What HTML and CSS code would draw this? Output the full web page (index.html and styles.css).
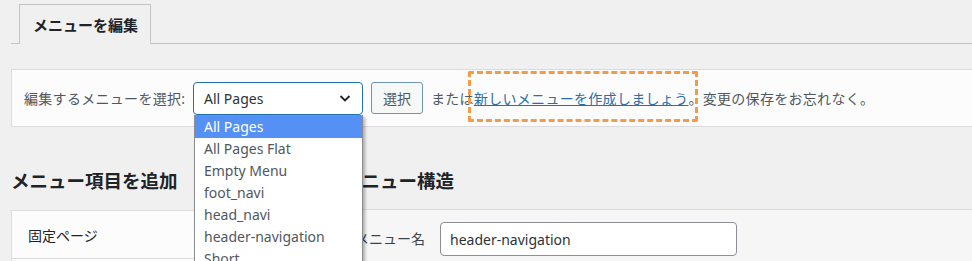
FILE: index.html
```html
<!DOCTYPE html>
<html lang="ja">
<head>
    <meta charset="UTF-8">
    <title>メニューを編集</title>
    <link rel="stylesheet" href="styles.css">
</head>
<body>
    <div class="wrap">
        <!-- Tabs -->
        <div class="tabs">
            <a href="#" class="tab active">メニューを編集</a>
        </div>

        <!-- Select menu bar -->
        <div class="manage">
            <span class="manage-label">編集するメニューを選択:</span>
            <div class="select-wrap">
                <div class="select">
                    <span>All Pages</span>
                    <svg class="chevron" width="16" height="16" viewBox="0 0 16 16">
                        <path d="M3.5 6 L8 10.5 L12.5 6" fill="none" stroke="#1d2327" stroke-width="1.8"/>
                    </svg>
                </div>
                <ul class="dropdown">
                    <li class="selected">All Pages</li>
                    <li>All Pages Flat</li>
                    <li>Empty Menu</li>
                    <li>foot_navi</li>
                    <li>head_navi</li>
                    <li>header-navigation</li>
                    <li>Short</li>
                </ul>
            </div>
            <button class="btn">選択</button>
            <span class="manage-text">または<span class="marked"><a href="#">新しいメニューを作成しましょう</a></span>。変更の保存をお忘れなく。</span>
        </div>

        <!-- Columns -->
        <div class="columns">
            <div class="col-left">
                <h2>メニュー項目を追加</h2>
                <div class="panel">
                    <div class="panel-head">固定ページ</div>
                </div>
            </div>
            <div class="col-right">
                <h2>メニュー構造</h2>
                <div class="menu-edit">
                    <label>メニュー名</label>
                    <input type="text" value="header-navigation">
                </div>
            </div>
        </div>
    </div>
</body>
</html>
```

FILE: styles.css
```css
* {
    margin: 0;
    padding: 0;
    box-sizing: border-box;
}

body {
    background: #f0f0f1;
    font-family: "Noto Sans", "Noto Sans CJK JP", sans-serif;
    font-size: 14px;
    color: #50575e;
    overflow: hidden;
}

.wrap {
    margin-left: 11px;
}

/* tabs */
.tabs {
    display: flex;
    padding-top: 4px;
    padding-left: 8px;
    border-bottom: 1px solid #c3c4c7;
    height: 44px;
}

.tab {
    display: flex;
    align-items: center;
    height: 40px;
    padding: 0 12px 0 13px;
    border: 1px solid #c3c4c7;
    border-bottom: none;
    background: #f0f0f1;
    color: #1d2327;
    font-size: 15px;
    font-weight: 700;
    text-decoration: none;
    margin-bottom: -1px;
}

/* manage bar */
.manage {
    display: flex;
    align-items: center;
    margin-top: 25px;
    height: 58px;
    padding-left: 12px;
    background: #fcfcfc;
    border: 1px solid #dcdcde;
    border-right: none;
}

.manage-label {
    width: 169px;
    letter-spacing: 0.3px;
}

.select-wrap {
    position: relative;
}

.select {
    display: flex;
    align-items: center;
    justify-content: space-between;
    width: 170px;
    height: 33px;
    padding: 0 9px 0 10px;
    border: 1px solid #2271b1;
    border-radius: 4px;
    background: #fff;
    color: #2c3338;
}

.chevron {
    display: block;
}

.dropdown {
    position: absolute;
    top: 33px;
    left: 1px;
    width: 169px;
    list-style: none;
    background: #fff;
    border: 1px solid #8c8f94;
    box-shadow: 2px 2px 3px rgba(0, 0, 0, 0.3);
    z-index: 10;
}

.dropdown li {
    height: 22px;
    line-height: 22px;
    padding-left: 9px;
    color: #50575e;
    white-space: nowrap;
}

.dropdown li.selected {
    background: #5591f5;
    color: #fff;
}

.btn {
    margin-left: 8px;
    width: 52px;
    height: 32px;
    border: 1px solid #6f94b8;
    border-radius: 3px;
    background: #f6f7f7;
    color: #50575e;
    font-family: inherit;
    font-size: 14px;
}

.manage-text {
    margin-left: 8px;
    letter-spacing: 0.3px;
}

.marked {
    position: relative;
}

.marked a {
    color: #2d6ea8;
    text-decoration: underline;
}

.marked::after {
    content: "";
    position: absolute;
    left: -6px;
    right: -10px;
    top: -18px;
    bottom: -14px;
    border: 3px dashed #f59a45;
    border-radius: 2px;
}

/* columns */
.columns {
    display: flex;
    gap: 22px;
}

.col-left {
    width: 310px;
}

.col-right {
    flex: 1;
}

h2 {
    margin-top: 42px;
    height: 24px;
    line-height: 24px;
    font-size: 18.5px;
    font-weight: 700;
    color: #1d2327;
}

.panel {
    margin-top: 17px;
    background: #fcfcfc;
    border: 1px solid #dcdcde;
    height: 80px;
}

.panel-head {
    height: 48px;
    display: flex;
    align-items: center;
    padding-left: 16px;
    border-bottom: 1px solid #dcdcde;
    color: #1d2327;
}

.menu-edit {
    margin-top: 16px;
    display: flex;
    height: 80px;
    align-items: flex-start;
    padding: 12px 0 0 12px;
    border-top: 1px solid #dcdcde;
    background: #f6f6f6;
}

.menu-edit label {
    width: 85px;
    line-height: 34px;
    color: #3c434a;
}

.menu-edit input {
    width: 297px;
    height: 34px;
    padding: 0 9px;
    border: 1px solid #8c8f94;
    border-radius: 4px;
    background: #fff;
    font-family: inherit;
    font-size: 14px;
    color: #2c3338;
}
```
